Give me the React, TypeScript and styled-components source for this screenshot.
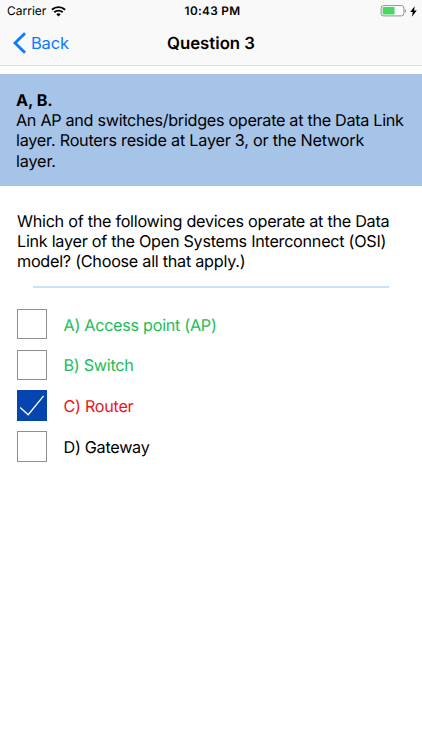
import React from "react";
import styled, { createGlobalStyle } from "styled-components";

const GlobalStyle = createGlobalStyle`
  * { box-sizing: border-box; }
  body { margin: 0; background: #fff; }
`;

const Screen = styled.main`
  width: 422px;
  height: 750px;
  background: #fff;
  color: #000;
  font-family: Inter, "Liberation Sans", sans-serif;
  font-size: 16.2px;
  line-height: 20.4px;
  text-rendering: geometricPrecision;
  overflow: hidden;
`;

const Header = styled.header`
  height: 66px;
  background: #f9f9f9;
  border-bottom: 1px solid #dcdce0;
`;

const StatusBar = styled.div`
  display: grid;
  grid-template-columns: 1fr auto 1fr;
  align-items: center;
  height: 21px;
  padding: 1px 5px 0 7px;
  font-size: 12px;
  line-height: 20px;
`;

const StatusGroup = styled.div<{ $end?: boolean }>`
  display: flex;
  align-items: center;
  justify-content: ${(p) => (p.$end ? "flex-end" : "flex-start")};
  gap: ${(p) => (p.$end ? "4px" : "5px")};
`;

const Clock = styled.span`
  padding-left: 1px;
  font-weight: 600;
  font-size: 11.8px;
  letter-spacing: 0.3px;
`;

const NavBar = styled.nav`
  display: grid;
  grid-template-columns: 1fr auto 1fr;
  align-items: center;
  height: 44px;
  padding: 0 13px;
`;

const BackButton = styled.button`
  display: flex;
  align-items: center;
  gap: 5px;
  padding: 0;
  border: 0;
  background: none;
  color: #0a7aff;
  font: inherit;
  font-size: 16.5px;
  letter-spacing: -0.2px;
`;

const Title = styled.h1`
  margin: 0;
  padding-top: 2px;
  font-size: 16.8px;
  font-weight: 600;
`;

const Explanation = styled.section`
  height: 112px;
  margin-top: 8px;
  padding: 15.6px 16px 0;
  background: #a6c3e8;
`;

const Line = styled.span<{ $spacing?: number; $bold?: boolean }>`
  display: block;
  white-space: nowrap;
  font-weight: ${(p) => (p.$bold ? 700 : 400)};
  letter-spacing: ${(p) => p.$spacing ?? -0.28}px;
`;

const Question = styled.section`
  padding: 24.6px 17px 0;
`;

const Divider = styled.hr`
  height: 2px;
  margin: 14.4px 33px 21px;
  border: 0;
  background: #c9e2fa;
`;

const Options = styled.div`
  display: flex;
  flex-direction: column;
  gap: 9.8px;
  padding-left: 17px;
`;

const Option = styled.label<{ $color: string }>`
  display: flex;
  align-items: center;
  gap: 16.5px;
  height: 31px;
  color: ${(p) => p.$color};
`;

const CheckBox = styled.span<{ $checked: boolean }>`
  display: flex;
  align-self: flex-start;
  width: 30px;
  height: 30.4px;
  margin-top: -0.4px;
  border: ${(p) => (p.$checked ? "0" : "1px solid #8f8f8f")};
  background: ${(p) => (p.$checked ? "#0445b0" : "#fff")};
`;

const explanation = [
  { text: "An AP and switches/bridges operate at the Data Link", spacing: -0.3 },
  { text: "layer. Routers reside at Layer 3, or the Network", spacing: -0.23 },
  { text: "layer.", spacing: -0.15 },
];

const question = [
  { text: "Which of the following devices operate at the Data", spacing: -0.27 },
  { text: "Link layer of the Open Systems Interconnect (OSI)", spacing: -0.27 },
  { text: "model? (Choose all that apply.)", spacing: -0.26 },
];

const options = [
  { text: "A) Access point (AP)", color: "#1dbd59", checked: false },
  { text: "B) Switch", color: "#1dbd59", checked: false },
  { text: "C) Router", color: "#ee1418", checked: true },
  { text: "D) Gateway", color: "#000", checked: false },
];

const WifiIcon = () => (
  <svg width="15" height="11" viewBox="0 0 15 11">
    <path d="M7.5 10.6 5.3 8.3a3.2 3.2 0 0 1 4.4 0Z" />
    <path d="M3.3 6.3a6 6 0 0 1 8.4 0M.9 3.8a9.4 9.4 0 0 1 13.2 0" fill="none" stroke="#000" strokeWidth="1.9" />
  </svg>
);

const BatteryIcon = () => (
  <svg width="27" height="12" viewBox="0 0 27 12">
    <rect x="2.1" y=".6" width="22.8" height="10.3" rx="2.5" fill="#fff" stroke="#929292" />
    <rect x="3.6" y="2" width="12" height="7.5" rx=".7" fill="#4bd763" />
    <path d="M25.9 4v3.8q1.1-.7 1.1-1.9T25.9 4Z" fill="#929292" />
  </svg>
);

const BoltIcon = () => (
  <svg width="7" height="11" viewBox="0 0 7 11">
    <path d="M4.7.2.2 6h2.6L1.9 10.8 6.8 4.5H4.1Z" />
  </svg>
);

const BackIcon = () => (
  <svg width="13" height="22" viewBox="0 0 13 22">
    <path d="M12 1.2 2 11l10 9.8" fill="none" stroke="#0a7aff" strokeWidth="2.8" />
  </svg>
);

const Tick = () => (
  <svg width="30" height="30" viewBox="0 0 30 30">
    <path d="m3.2 17.6 8 7.1L26.6 5.8" fill="none" stroke="#fff" strokeWidth="1.3" />
  </svg>
);

export default function App() {
  return (
    <Screen>
      <GlobalStyle />
      <Header>
        <StatusBar>
          <StatusGroup>
            <span>Carrier</span>
            <WifiIcon />
          </StatusGroup>
          <Clock>10:43 PM</Clock>
          <StatusGroup $end>
            <BatteryIcon />
            <BoltIcon />
          </StatusGroup>
        </StatusBar>
        <NavBar>
          <BackButton>
            <BackIcon />
            Back
          </BackButton>
          <Title>Question 3</Title>
        </NavBar>
      </Header>
      <Explanation>
        <Line $bold $spacing={-0.05}>A, B.</Line>
        {explanation.map((l) => (
          <Line key={l.text} $spacing={l.spacing}>{l.text}</Line>
        ))}
      </Explanation>
      <Question>
        {question.map((l) => (
          <Line key={l.text} $spacing={l.spacing}>{l.text}</Line>
        ))}
      </Question>
      <Divider />
      <Options>
        {options.map((o) => (
          <Option key={o.text} $color={o.color}>
            <CheckBox $checked={o.checked}>{o.checked && <Tick />}</CheckBox>
            <Line>{o.text}</Line>
          </Option>
        ))}
      </Options>
    </Screen>
  );
}
